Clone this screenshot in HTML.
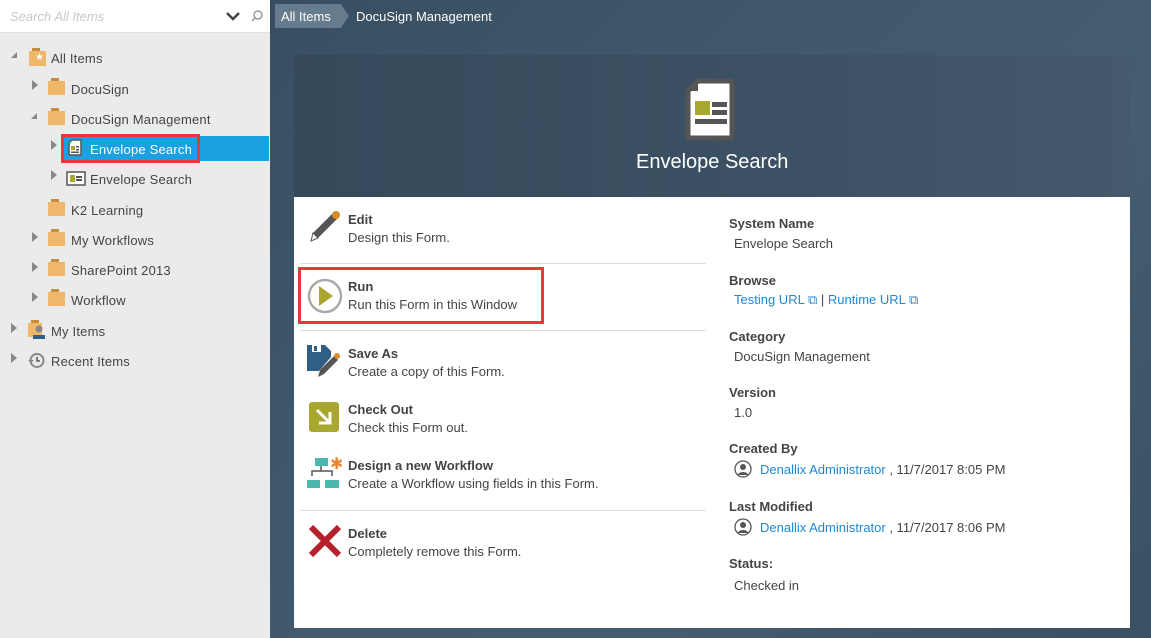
<!DOCTYPE html>
<html><head><meta charset="utf-8"><style>
*{margin:0;padding:0;box-sizing:border-box}
body{width:1151px;height:638px;overflow:hidden;font-family:"Liberation Sans",sans-serif;font-size:13px;color:#444;position:relative;background:linear-gradient(135deg,#34495a 0%,#3f576b 40%,#455d70 70%,#3a5163 100%)}
.a{position:absolute;white-space:nowrap}
#left{position:absolute;left:0;top:0;width:270px;height:638px;background:#ebebeb}
#search{position:absolute;left:0;top:0;width:270px;height:33px;background:#fff;border-bottom:1px solid #e0e0e0}
.tri{position:absolute;width:0;height:0;border-top:5px solid transparent;border-bottom:5px solid transparent;border-left:6px solid #888}
.trid{position:absolute;width:0;height:0;border-left:6px solid transparent;border-bottom:6px solid #888}
.fold{position:absolute;width:17px;height:14px;background:#efb769}
.fold:before{content:"";position:absolute;left:3px;top:-3px;width:8px;height:3px;background:#c68d3f}
.t{position:absolute;font-size:13px;color:#444;letter-spacing:0.2px}
.card{position:absolute;left:294px;top:55px;width:836px;height:573px;background:#fff}
.hdr{position:absolute;left:0;top:0;width:836px;height:142px;background:linear-gradient(90deg,#34495a,#3c5264 60%,#44596b)}
.ti{font-weight:bold;color:#444;font-size:13px}
.sub{color:#444;font-size:13px}
.lbl{position:absolute;left:435px;font-weight:bold;color:#444;font-size:13px}
.val{position:absolute;left:440px;color:#444;font-size:13px}
.lnk{color:#1e88d4}
.sep{position:absolute;left:6px;width:406px;height:1px;background:#ddd}
</style></head><body>
<div id="left">
<div id="search"><span class="a" style="left:10px;top:9px;font-style:italic;color:#c8c8c8;font-size:13px">Search All Items</span>
<svg class="a" style="left:225px;top:11px" width="16" height="12"><path d="M2 2l6 6 6-6" stroke="#444" stroke-width="2.5" fill="none"/></svg>
<svg class="a" style="left:250px;top:9px" width="14" height="14"><circle cx="8" cy="6" r="4" stroke="#999" stroke-width="1.5" fill="none"/><path d="M5 9l-3 3" stroke="#999" stroke-width="1.5"/></svg>
</div>
<div class="trid" style="left:11px;top:52px"></div>
<div class="fold" style="left:29px;top:51px;height:15px"></div><span class="a" style="left:35px;top:52px;color:#fff;font-size:10px">★</span>
<span class="t" style="left:51px;top:51px">All Items</span>
<div class="tri" style="left:32px;top:80px"></div><div class="fold" style="left:48px;top:81px"></div><span class="t" style="left:71px;top:82px">DocuSign</span>
<div class="trid" style="left:31px;top:113px"></div><div class="fold" style="left:48px;top:111px"></div><span class="t" style="left:71px;top:112px">DocuSign Management</span>
<div class="a" style="left:62px;top:136px;width:207px;height:25px;background:#1ba1e2"></div>
<div class="a" style="left:61px;top:134px;width:139px;height:29px;border:3px solid #e8383d"></div>
<div class="tri" style="left:51px;top:140px"></div>
<svg class="a" style="left:68px;top:139px" width="14" height="17"><path d="M1 4l3-3h9v15H1z" fill="#fff" stroke="#555" stroke-width="1.5"/><rect x="3" y="7" width="4" height="4" fill="#a8a830"/><rect x="8" y="7" width="3" height="1.5" fill="#555"/><rect x="8" y="10" width="3" height="1.5" fill="#555"/><rect x="3" y="12.5" width="8" height="1.5" fill="#555"/></svg>
<span class="t" style="left:90px;top:142px;color:#fff">Envelope Search</span>
<div class="tri" style="left:51px;top:170px"></div>
<svg class="a" style="left:66px;top:171px" width="20" height="15"><rect x="1" y="1" width="18" height="13" fill="#fff" stroke="#555" stroke-width="1.5"/><rect x="4" y="4" width="5" height="7" fill="#a8a830"/><rect x="10" y="5" width="6" height="2" fill="#555"/><rect x="10" y="8" width="6" height="2" fill="#555"/></svg>
<span class="t" style="left:90px;top:172px">Envelope Search</span>
<div class="fold" style="left:48px;top:202px"></div><span class="t" style="left:71px;top:203px">K2 Learning</span>
<div class="tri" style="left:32px;top:232px"></div><div class="fold" style="left:48px;top:232px"></div><span class="t" style="left:71px;top:233px">My Workflows</span>
<div class="tri" style="left:32px;top:262px"></div><div class="fold" style="left:48px;top:262px"></div><span class="t" style="left:71px;top:263px">SharePoint 2013</span>
<div class="tri" style="left:32px;top:292px"></div><div class="fold" style="left:48px;top:292px"></div><span class="t" style="left:71px;top:293px">Workflow</span>
<div class="tri" style="left:11px;top:323px"></div>
<div class="fold" style="left:28px;top:323px;width:14px"></div>
<svg class="a" style="left:32px;top:325px" width="14" height="14"><circle cx="7" cy="4" r="3.5" fill="#888"/><path d="M1 14v-4h12v4z" fill="#2f5f85"/></svg>
<span class="t" style="left:51px;top:324px">My Items</span>
<div class="tri" style="left:11px;top:353px"></div>
<svg class="a" style="left:28px;top:352px" width="17" height="17"><circle cx="9" cy="8.5" r="6.5" stroke="#888" stroke-width="2" fill="none"/><path d="M9 5v4h3" stroke="#555" stroke-width="1.5" fill="none"/><path d="M0 8l3 3 3-3z" fill="#888"/></svg>
<span class="t" style="left:51px;top:354px">Recent Items</span>
</div>
<div class="a" style="left:275px;top:4px;width:66px;height:24px;background:#667b8c"></div>
<div class="a" style="left:341px;top:4px;width:0;height:0;border-top:12px solid transparent;border-bottom:12px solid transparent;border-left:8px solid #667b8c"></div>
<span class="a" style="left:281px;top:9px;color:#fff">All Items</span>
<span class="a" style="left:356px;top:9px;color:#fff">DocuSign Management</span>
<div class="card">
<div class="hdr">
<svg class="a" style="left:390px;top:22px" width="60" height="70"><path d="M4 14l10-10h34v57H4z" fill="#fff" stroke="#555" stroke-width="5" stroke-linejoin="round"/><path d="M4 14h10V4z" fill="#555"/><rect x="11" y="24" width="15" height="14" fill="#a8a830"/><rect x="28" y="25" width="15" height="5" fill="#555"/><rect x="28" y="33" width="15" height="5" fill="#555"/><rect x="11" y="42" width="32" height="5" fill="#555"/></svg>
<span class="a" style="left:342px;top:96px;color:#fff;font-size:20px">Envelope Search</span>
</div>
<svg class="a" style="left:14px;top:155px" width="34" height="34"><path d="M3 31l2-8 20-20 5 5-20 20z" fill="#555"/><circle cx="28" cy="5" r="4" fill="#d98a2b"/><path d="M3 31l2-8 5 5z" fill="#fff" stroke="#555"/></svg>
<div class="a" style="left:54px;top:157px"><div class="ti">Edit</div><div class="sub" style="margin-top:3px">Design this Form.</div></div>
<div class="sep" style="top:208px"></div>
<div class="a" style="left:4px;top:212px;width:246px;height:57px;border:3px solid #e8383d"></div>
<svg class="a" style="left:12px;top:222px" width="38" height="38"><circle cx="19" cy="19" r="16" stroke="#aaa" stroke-width="2.5" fill="#fff"/><path d="M13 9l14 10-14 10z" fill="#a8a830"/></svg>
<div class="a" style="left:54px;top:224px"><div class="ti">Run</div><div class="sub" style="margin-top:3px">Run this Form in this Window</div></div>
<div class="sep" style="top:275px"></div>
<svg class="a" style="left:12px;top:288px" width="36" height="36"><path d="M1 2h18l6 6v6l-12 14H1z" fill="#2f5f85"/><rect x="6" y="2" width="9" height="7" fill="#fff"/><rect x="8" y="3" width="3" height="5" fill="#2f5f85"/><path d="M12 34l2-7 14-14 4 4-14 14z" fill="#555"/><circle cx="31" cy="13" r="3" fill="#d98a2b"/></svg>
<div class="a" style="left:54px;top:291px"><div class="ti">Save As</div><div class="sub" style="margin-top:3px">Create a copy of this Form.</div></div>
<div class="a" style="left:15px;top:347px;width:30px;height:30px;background:#a8a830;border-radius:3px"></div>
<svg class="a" style="left:15px;top:347px" width="30" height="30"><path d="M8 8l13 13M21 10v11H10" stroke="#fff" stroke-width="3" fill="none"/></svg>
<div class="a" style="left:54px;top:347px"><div class="ti">Check Out</div><div class="sub" style="margin-top:3px">Check this Form out.</div></div>
<svg class="a" style="left:12px;top:400px" width="36" height="36"><rect x="9" y="3" width="13" height="8" fill="#4bb8b0"/><text x="24" y="14" font-size="16" fill="#e8893a" font-family="Liberation Sans">✱</text><path d="M15 11v5M6 21v-5h20v5" stroke="#555" stroke-width="1.5" fill="none"/><rect x="1" y="25" width="13" height="8" fill="#4bb8b0"/><rect x="19" y="25" width="14" height="8" fill="#4bb8b0"/></svg>
<div class="a" style="left:54px;top:403px"><div class="ti">Design a new Workflow</div><div class="sub" style="margin-top:3px">Create a Workflow using fields in this Form.</div></div>
<div class="sep" style="top:455px"></div>
<svg class="a" style="left:14px;top:469px" width="34" height="34"><path d="M3 3l28 28M31 3L3 31" stroke="#b5222d" stroke-width="6"/></svg>
<div class="a" style="left:54px;top:471px"><div class="ti">Delete</div><div class="sub" style="margin-top:3px">Completely remove this Form.</div></div>
<div class="lbl" style="top:161px">System Name</div><div class="val" style="top:181px">Envelope Search</div>
<div class="lbl" style="top:218px">Browse</div><div class="val" style="top:237px"><span class="lnk">Testing URL ⧉</span> | <span class="lnk">Runtime URL ⧉</span></div>
<div class="lbl" style="top:274px">Category</div><div class="val" style="top:294px">DocuSign Management</div>
<div class="lbl" style="top:330px">Version</div><div class="val" style="top:350px">1.0</div>
<div class="lbl" style="top:386px">Created By</div>
<svg class="a" style="left:440px;top:405px" width="18" height="18"><circle cx="9" cy="9" r="8" stroke="#555" stroke-width="1.3" fill="#fff"/><circle cx="9" cy="7" r="3" fill="#555"/><path d="M3.5 15a6 5 0 0 1 11 0z" fill="#555"/></svg>
<div class="val" style="left:466px;top:407px"><span class="lnk">Denallix Administrator</span> , 11/7/2017 8:05 PM</div>
<div class="lbl" style="top:444px">Last Modified</div>
<svg class="a" style="left:440px;top:463px" width="18" height="18"><circle cx="9" cy="9" r="8" stroke="#555" stroke-width="1.3" fill="#fff"/><circle cx="9" cy="7" r="3" fill="#555"/><path d="M3.5 15a6 5 0 0 1 11 0z" fill="#555"/></svg>
<div class="val" style="left:466px;top:465px"><span class="lnk">Denallix Administrator</span> , 11/7/2017 8:06 PM</div>
<div class="lbl" style="top:501px">Status:</div><div class="val" style="top:523px">Checked in</div>
</div>
</body></html>
